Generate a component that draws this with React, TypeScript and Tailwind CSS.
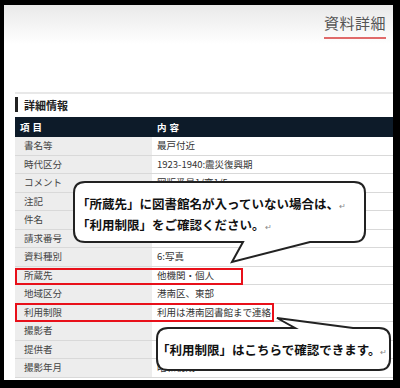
import React from "react";

type Row = { label: string; value: string };

const rows: Row[] = [
  { label: "書名等", value: "最戸付近" },
  { label: "時代区分", value: "1923-1940:震災復興期" },
  { label: "コメント", value: "図版番号1/変1/5" },
  { label: "注記", value: "" },
  { label: "件名", value: "" },
  { label: "請求番号", value: "" },
  { label: "資料種別", value: "6:写真" },
  { label: "所蔵先", value: "他機関・個人" },
  { label: "地域区分", value: "港南区、東部" },
  { label: "利用制限", value: "利用は港南図書館まで連絡" },
  { label: "撮影者", value: "" },
  { label: "提供者", value: "" },
  { label: "撮影年月", value: "昭和初期" },
];

const font = { fontFamily: '"Noto Sans CJK JP", "Noto Sans", sans-serif' };

function Callouts() {
  return (
    <svg className="absolute left-0 top-0" width={400} height={388} viewBox="0 0 400 388">
      <path
        d="M 85 182 H 354 Q 365 182 365 193 V 231 Q 365 242 354 242 H 310 L 232 262 L 243 242 H 85 Q 74 242 74 231 V 193 Q 74 182 85 182 Z"
        fill="#fff"
        stroke="#222"
        strokeWidth={2}
      />
      <path
        d="M 168 328 H 295 L 277 318 L 353 328 H 379 Q 390 328 390 339 V 359 Q 390 370 379 370 H 168 Q 157 370 157 359 V 339 Q 157 328 168 328 Z"
        fill="#fff"
        stroke="#222"
        strokeWidth={2}
      />
    </svg>
  );
}

export default function App() {
  return (
    <div className="relative h-[388px] w-[400px] overflow-hidden bg-black pl-[4px] pt-[5px]" style={font}>
      <div className="h-[375px] w-[389px] overflow-hidden bg-white">
        <div className="h-[87px] bg-gradient-to-b from-[#e9e9e9] to-white to-[45%]">
          <div className="flex justify-end pr-[7px] pt-[8px]">
            <div className="flex flex-col items-stretch">
              <span className="text-[15px] leading-[20px] tracking-[0.5px] text-[#555]">資料詳細</span>
              <span className="mt-[4px] h-[2px] bg-[#e06a6a]" />
            </div>
          </div>
        </div>
        <div className="ml-[11px] h-[2px] bg-[#e8e8e8]" />
        <div className="ml-[11px] mt-[3px] flex h-[20px] items-start">
          <span className="h-[15px] w-[3px] bg-[#222]" />
          <span className="ml-[6px] text-[11px] font-bold leading-[16px] text-[#222]">詳細情報</span>
        </div>
        <div className="ml-[11px]">
          <div className="grid h-[20px] grid-cols-[137px_1fr] items-center bg-[#0d1b29] text-[9.5px] font-bold tracking-[3px] text-white">
            <span className="pl-[5px]">項目</span>
            <span className="pl-[5px]">内容</span>
          </div>
          {rows.map((r) => (
            <div key={r.label} className="grid h-[18.5px] grid-cols-[137px_1fr] border-b border-[#d9d9d9] text-[9.5px] leading-[17px]">
              <span className="bg-[#ededed] pl-[9px] text-[#444]">{r.label}</span>
              <span className="pl-[5px] text-[#333]">{r.value}</span>
            </div>
          ))}
        </div>
      </div>

      <div className="absolute left-[15px] top-[268px] h-[17px] w-[228px] border-2 border-[#e8101a]" />
      <div className="absolute left-[15px] top-[303px] h-[19px] w-[259px] border-2 border-[#e8101a]" />

      <Callouts />

      <div className="absolute left-[77px] top-[194px] text-[12.5px] font-bold leading-[19px] text-[#111]">
        <div>
          「所蔵先」に図書館名が入っていない場合は、<span className="text-[8px] font-normal text-[#888]">↵</span>
        </div>
        <div>
          「利用制限」をご確認ください。<span className="text-[8px] font-normal text-[#888]">↵</span>
        </div>
      </div>
      <div className="absolute left-[157px] top-[340px] text-[12.5px] font-bold leading-[19px] text-[#111]">
        「利用制限」はこちらで確認できます。<span className="text-[8px] font-normal text-[#888]">↵</span>
      </div>
    </div>
  );
}
